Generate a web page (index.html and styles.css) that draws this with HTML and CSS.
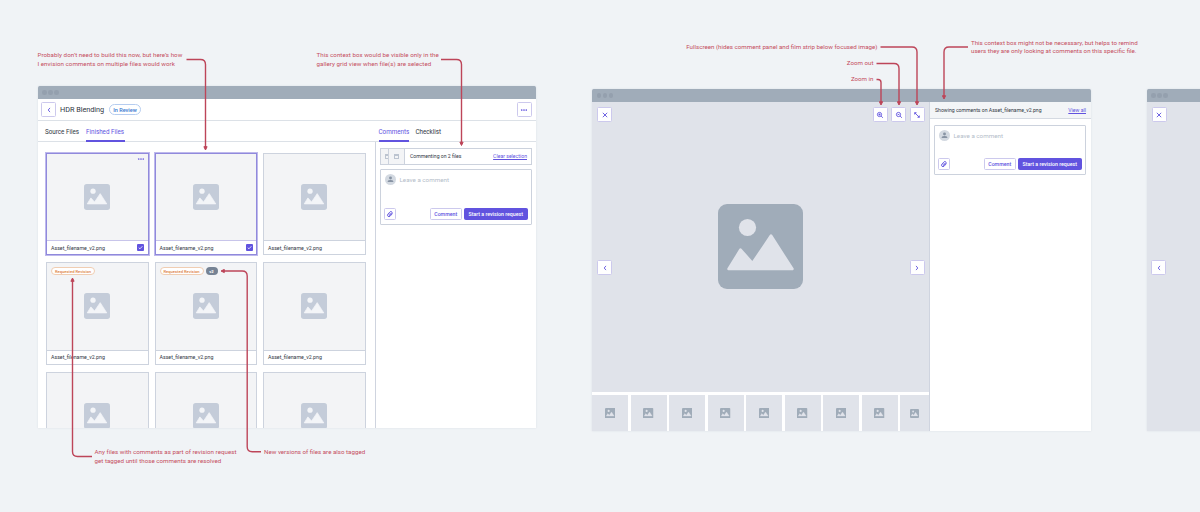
FILE: index.html
```
<!DOCTYPE html>
<html lang="en">
<head>
<meta charset="utf-8">
<title>HDR Blending – review flow</title>
<link rel="stylesheet" href="styles.css">
</head>
<body>
<svg class="defs" width="0" height="0">
  <symbol id="picture" viewBox="0 0 85 85"><rect width="85" height="85" rx="9" fill="currentColor"/><g class="cut"><circle cx="29.5" cy="23.5" r="8.6"/><path d="M10.5 65 22.5 45.500 34.500 59 53 31.500 74.500 65Z" stroke-width="2.500" stroke-linejoin="round"/></g></symbol>
  <symbol id="chev" viewBox="0 0 8 8"><path d="M5 1.900 3.200 4 5 6.100" class="ln"/></symbol>
  <symbol id="close" viewBox="0 0 8 8"><path d="M1.800 1.800 6.200 6.200M6.200 1.800 1.800 6.200" class="ln"/></symbol>
  <symbol id="more" viewBox="0 0 8 8"><g fill="currentColor"><circle cx="1.700" cy="4" r=".85"/><circle cx="4" cy="4" r=".85"/><circle cx="6.300" cy="4" r=".85"/></g></symbol>
  <symbol id="zin" viewBox="0 0 8 8"><circle cx="3.500" cy="3.500" r="2.100" class="ln"/><path d="M5.100 5.100 6.900 6.800M2.500 3.500H4.500M3.500 2.500V4.500" class="ln"/></symbol>
  <symbol id="zout" viewBox="0 0 8 8"><circle cx="3.500" cy="3.500" r="2.100" class="ln"/><path d="M5.100 5.100 6.900 6.800M2.700 3.500H4.300" class="ln"/></symbol>
  <symbol id="full" viewBox="0 0 8 8"><path d="M1.700 3.500V1.700H3.500M1.700 1.700 6.300 6.300M6.300 4.500V6.300H4.500" class="ln"/></symbol>
  <symbol id="clip" viewBox="0 0 8 8"><path d="M6.500 3.500 4.100 6.200A1.500 1.500 0 0 1 1.900 4.100L4.200 1.700A1.150 1.150 0 0 1 5.900 3.200L3.900 5.300A.5.500 0 0 1 3.100 4.600L4.800 2.800" class="ln"/></symbol>
  <symbol id="check" viewBox="0 0 8 8"><path d="M2 4.200 3.400 5.500 6.100 2.600" class="ln"/></symbol>
  <symbol id="user" viewBox="0 0 11 11"><circle cx="5.500" cy="5.500" r="5.500" fill="#d3d9e1"/><circle cx="5.500" cy="4" r="1.450" fill="#8793a3"/><path d="M2.700 8V7.200Q2.900 6 5.500 6T8.300 7.200V8Z" fill="#8793a3"/></symbol>
</svg>

<main class="canvas">
  <section class="window gallery">
    <div class="titlebar"><i></i><i></i><i></i></div>
    <header class="project">
      <button class="sq"><svg><use href="#chev"/></svg></button>
      <h1>HDR Blending</h1><span class="status">In Review</span>
      <button class="sq end"><svg><use href="#more"/></svg></button>
    </header>
    <nav class="tabs">
      <a class="t-source">Source Files</a><a class="t-finished active">Finished Files</a>
      <a class="t-comments active">Comments</a><a class="t-check">Checklist</a>
    </nav>
    <div class="body">
      <div class="grid">
        <article class="card sel"><div class="thumb"><svg class="dots"><use href="#more"/></svg><svg class="pic"><use href="#picture"/></svg></div><footer><span>Asset_filename_v2.png</span><b><svg><use href="#check"/></svg></b></footer></article>
        <article class="card sel"><div class="thumb"><svg class="pic"><use href="#picture"/></svg></div><footer><span>Asset_filename_v2.png</span><b><svg><use href="#check"/></svg></b></footer></article>
        <article class="card"><div class="thumb"><svg class="pic"><use href="#picture"/></svg></div><footer><span>Asset_filename_v2.png</span></footer></article>
        <article class="card"><div class="thumb"><div class="tags"><em>Requested Revision</em></div><svg class="pic"><use href="#picture"/></svg></div><footer><span>Asset_filename_v2.png</span></footer></article>
        <article class="card"><div class="thumb"><div class="tags"><em>Requested Revision</em><strong>v2</strong></div><svg class="pic"><use href="#picture"/></svg></div><footer><span>Asset_filename_v2.png</span></footer></article>
        <article class="card"><div class="thumb"><svg class="pic"><use href="#picture"/></svg></div><footer><span>Asset_filename_v2.png</span></footer></article>
        <article class="card"><div class="thumb"><svg class="pic"><use href="#picture"/></svg></div></article>
        <article class="card"><div class="thumb"><svg class="pic"><use href="#picture"/></svg></div></article>
        <article class="card"><div class="thumb"><svg class="pic"><use href="#picture"/></svg></div></article>
      </div>
      <aside class="panel">
        <div class="context"><span class="mini half"><i></i></span><span class="mini"><i></i></span><span class="ctx">Commenting on 2 files</span><a class="clear">Clear selection</a></div>
        <div class="composer">
          <div class="entry"><svg class="avatar"><use href="#user"/></svg><span class="ph">Leave a comment</span></div>
          <div class="actions"><button class="attach"><svg><use href="#clip"/></svg></button><button class="btn"><span>Comment</span></button><button class="btn primary"><span>Start a revision request</span></button></div>
        </div>
      </aside>
    </div>
  </section>

  <section class="window focus">
    <div class="titlebar"><i></i><i></i><i></i></div>
    <div class="split">
      <div class="left">
        <div class="viewer">
          <div class="tools"><button class="sq"><svg><use href="#close"/></svg></button><button class="sq end"><svg><use href="#zin"/></svg></button><button class="sq"><svg><use href="#zout"/></svg></button><button class="sq"><svg><use href="#full"/></svg></button></div>
          <div class="stage"><button class="sq"><svg><use href="#chev"/></svg></button><svg class="big"><use href="#picture"/></svg><button class="sq flip"><svg><use href="#chev"/></svg></button></div>
        </div>
        <div class="strip">
          <div><svg><use href="#picture"/></svg></div><div><svg><use href="#picture"/></svg></div><div><svg><use href="#picture"/></svg></div><div><svg><use href="#picture"/></svg></div><div><svg><use href="#picture"/></svg></div><div><svg><use href="#picture"/></svg></div><div><svg><use href="#picture"/></svg></div><div><svg><use href="#picture"/></svg></div><div class="last"><svg><use href="#picture"/></svg></div>
        </div>
      </div>
      <aside class="side">
        <div class="showing"><span class="show">Showing comments on Asset_filename_v2.png</span><a class="view">View all</a></div>
        <div class="composer short">
          <div class="entry"><svg class="avatar"><use href="#user"/></svg><span class="ph">Leave a comment</span></div>
          <div class="actions"><button class="attach"><svg><use href="#clip"/></svg></button><button class="btn"><span>Comment</span></button><button class="btn primary"><span>Start a revision request</span></button></div>
        </div>
      </aside>
    </div>
  </section>

  <section class="window full">
    <div class="titlebar"><i></i><i></i><i></i></div>
    <div class="viewer">
      <div class="tools"><button class="sq"><svg><use href="#close"/></svg></button></div>
      <div class="stage"><button class="sq"><svg><use href="#chev"/></svg></button></div>
    </div>
  </section>

  <svg class="arrows" viewBox="0 0 1200 512">
    <defs><marker id="tip" viewBox="0 0 6 5" refX="3" refY="2.500" markerWidth="6" markerHeight="5" markerUnits="userSpaceOnUse" orient="auto"><path d="M1.200.900 4.500 2.500 1.200 4.100Z"/></marker></defs>
    <path d="M186.500 59.500H200.500Q205.500 59.500 205.500 64.500V148.500"/>
    <path d="M441 59.500H456.500Q461.500 59.500 461.500 64.500V144"/>
    <path d="M92 456.500H77.500Q72.500 456.500 72.500 451.500V279.500"/>
    <path d="M261 451.700H252.200Q247.200 451.700 247.200 446.700V276Q247.200 271 242.200 271H222.500"/>
    <path d="M880.500 47H912Q917 47 917 52V103.500"/>
    <path d="M876.500 63.500H894Q899 63.500 899 68.500V103.500"/>
    <path d="M876.500 79.500H878Q881 79.500 881 82.500V103.500"/>
    <path d="M968 47H949Q944 47 944 52V97.500"/>
  </svg>
  <p class="note n1"><span>Probably don’t need to build this now, but here’s how</span><span>I envision comments on multiple files would work</span></p>
  <p class="note n2"><span>This context box would be visible only in the</span><span>gallery grid view when file(s) are selected</span></p>
  <p class="note n3"><span>Any files with comments as part of revision request</span><span>get tagged until those comments are resolved</span></p>
  <p class="note n4"><span>New versions of files are also tagged</span></p>
  <p class="note n5"><span>Fullscreen (hides comment panel and film strip below focused image)</span></p>
  <p class="note n6"><span>Zoom out</span></p>
  <p class="note n7"><span>Zoom in</span></p>
  <p class="note n8"><span>This context box might not be necessary, but helps to remind</span><span>users they are only looking at comments on this specific file.</span></p>
</main>
</body>
</html>
```
FILE: styles.css
```
* { box-sizing: border-box; }
body { margin: 0; background: #f0f3f6; font-family: Roboto, "Liberation Sans", sans-serif; color: #30363f; }
svg { display: block; }
button { padding: 0; margin: 0; font: inherit; color: #6153df; background: #fff; border: 1px solid #ccc9ed; border-radius: 1.5px; display: flex; align-items: center; justify-content: center; flex: none; }
h1, p { margin: 0; font-weight: 400; }
span, a, h1, em, strong { white-space: nowrap; }
.defs { position: absolute; }
.cut { fill: var(--cut); stroke: var(--cut); }
.cut circle { stroke: none; }
.ln { fill: none; stroke: currentColor; stroke-width: .9; }
.canvas { position: relative; width: 1200px; height: 512px; overflow: hidden; }

.window { position: absolute; display: flex; flex-direction: column; background: #fff; box-shadow: 0 0 2px #d5dce3; border-radius: 1.5px 1.5px 0 0; overflow: hidden; }
.gallery { left: 37.5px; top: 86px; width: 498.5px; height: 342px; }
.focus { left: 592px; top: 89px; width: 498.5px; height: 342px; }
.full { left: 1146.500px; top: 89px; width: 498.5px; height: 342px; }
.titlebar { height: 13px; flex: none; background: #a0acb9; display: flex; align-items: center; gap: 1.500px; padding-left: 4.5px; }
.titlebar i { width: 4.500px; height: 4.500px; border-radius: 50%; background: #94a0ae; }

.sq { width: 15px; height: 15px; }
.sq svg { width: 8px; height: 8px; flex: none; }
.end { margin-left: auto; }
.project { height: 22px; flex: none; display: flex; align-items: center; padding: 0 4.500px 0 3.500px; border-bottom: 1px solid #dce1e7; }
h1 { font-size: 7.300px; margin-left: 4px; width: 45px; letter-spacing: -.03px; }
.status { margin-left: 4px; height: 11px; width: 32px; border: 1px solid #b6cdf0; border-radius: 6px; color: #3d78cf; font-size: 5.500px; font-weight: 500; display: flex; align-items: center; justify-content: center; }
.tabs { height: 21px; flex: none; display: flex; border-bottom: 1px solid #dce1e7; padding-left: 7.500px; font-size: 6.300px; letter-spacing: -.02px; line-height: 23px; }
.tabs a { height: 21px; margin-right: 7px; }
.tabs .active { color: #6153df; border-bottom: 2px solid #6153df; }
.t-source { width: 34px; }
.t-finished { width: 39px; }
.tabs .t-comments { width: 30px; margin-left: 246.500px; }

.body { flex: 1; min-height: 0; display: flex; }
.grid { width: 337.500px; height: 286px; overflow: hidden; padding: 10.500px 0 0 8.500px; display: grid; grid-template-columns: 102.500px 102.500px 102.500px; grid-auto-rows: 102.500px; gap: 7px 6px; flex: none; }
.card { border: 1px solid #cdd3de; display: flex; flex-direction: column; background: #fff; }
.thumb { height: 87.500px; flex: none; background: #f3f4f6; border-bottom: 1px solid #cdd3de; display: flex; align-items: center; justify-content: center; position: relative; color: #c4ccd9; --cut: #f3f5f8; }
.pic { width: 26px; height: 26px; }
.card footer { flex: 1; display: flex; align-items: center; justify-content: space-between; padding: 0 3.500px 0 4px; font-size: 5.250px; }
.sel { box-shadow: 0 0 0 1px #beb9ec; border-color: #9089dc; }
.sel .thumb { border-color: #c8c5ea; }
.sel b { width: 7px; height: 7px; background: #6153df; border-radius: 1px; color: #fff; }
.sel b svg { width: 7px; height: 7px; }
.dots { position: absolute; right: 3px; top: 1px; width: 8px; height: 8px; color: #7063df; }
.tags { position: absolute; left: 4px; top: 4px; display: flex; gap: 2px; }
.tags em, .tags strong { height: 8px; border-radius: 4px; font-style: normal; display: flex; align-items: center; justify-content: center; font-size: 4.100px; font-weight: 500; }
.tags em { width: 44px; border: 1px solid #f0cdb2; background: #fff; color: #dc8142; }
.tags strong { width: 12px; background: #768394; color: #fff; font-weight: 700; }

.panel { flex: 1; border-left: 1px solid #cfd4df; padding: 6px 4px 0 4px; }
.context { height: 16.500px; border: 1px solid #ccd2dd; display: flex; align-items: center; padding-right: 4px; font-size: 5.150px; }
.mini { width: 16px; height: 100%; background: #f3f4f6; border-right: 1px solid #ccd2dd; display: flex; align-items: center; justify-content: center; }
.mini.half { width: 8px; justify-content: flex-end; }
.mini i { width: 5px; height: 5px; border: 1px solid #bcc4d0; border-top-width: 2px; }
.half i { width: 3px; border-right: 0; }
.ctx { margin-left: 5px; }
.clear, .view { margin-left: auto; color: #6153df; text-decoration: underline; text-decoration-thickness: .5px; text-underline-offset: 1px; }
.composer { margin-top: 4.500px; height: 55.500px; border: 1px solid #ccd2dd; border-radius: 1px; display: flex; flex-direction: column; justify-content: space-between; padding: 4px 3.500px 4px 3px; background: #fff; }
.entry { display: flex; align-items: center; gap: 4px; height: 11px; font-size: 6.250px; color: #b4bdc9; padding-left: .500px; }
.avatar { width: 11px; height: 11px; }
.actions { display: flex; gap: 2.500px; font-size: 5.250px; font-weight: 500; }
.attach { width: 12px; height: 12px; margin-right: auto; }
.attach svg { width: 8px; height: 8px; }
.btn { width: 31.500px; height: 12px; }
.primary { width: 63.500px; background: #6153df; border-color: #6153df; color: #fff; }

.split { flex: 1; display: flex; min-height: 0; }
.left { width: 337px; display: flex; flex-direction: column; }
.viewer { background: #e0e3ea; flex: 1; padding: 5px 4.500px 5px 5px; color: #a0acb9; --cut: #e0e3ea; }
.tools { display: flex; gap: 3.300px; }
.stage { display: flex; align-items: center; justify-content: space-between; margin-top: 82px; height: 85px; }
.stage .sq { position: relative; top: 21px; }
.big { width: 85px; height: 85px; }
.flip svg { transform: scaleX(-1); }
.strip { height: 39px; padding-top: 3px; display: flex; gap: 2.500px; --cut: #e0e3ea; color: #a0acb9; }
.strip div { width: 36px; background: #e0e3ea; display: flex; align-items: center; justify-content: center; flex: none; }
.strip svg { width: 10.500px; height: 10.500px; }
.strip .last { flex: 1; }
.strip .last svg { width: 9px; height: 9px; }
.side { flex: 1; border-left: 1px solid #cfd4df; }
.showing { height: 17px; display: flex; align-items: center; padding: 0 4.500px 0 5px; background: #f3f5f7; border-bottom: 1px solid #d5dae2; font-size: 5.150px; }
.short { margin: 6px 4.500px 0 4px; height: 50px; }
.full .stage .sq { left: -.500px; }

.arrows { position: absolute; inset: 0; width: 1200px; height: 512px; }
.arrows > path { fill: none; stroke: #bd4559; stroke-width: 1.400; marker-end: url(#tip); }
#tip path { fill: #bd4559; stroke: #bd4559; stroke-width: 1; stroke-linejoin: round; }
.note { position: absolute; color: #c54e5e; font-size: 6.200px; line-height: 8.500px; }
.note span { display: block; width: max-content; }
.n1, .n2 { letter-spacing: .04px; }
.n1 { left: 37.500px; top: 51px; }
.n2 { left: 316.500px; top: 51px; }
.n3 { left: 94.500px; top: 448px; letter-spacing: .02px; }
.n4 { left: 264px; top: 448px; }
.n5 { right: 322.500px; top: 43px; }
.n6 { right: 326.500px; top: 59px; }
.n7 { right: 326.500px; top: 75px; }
.n8 { left: 971px; top: 38.500px; }
```
